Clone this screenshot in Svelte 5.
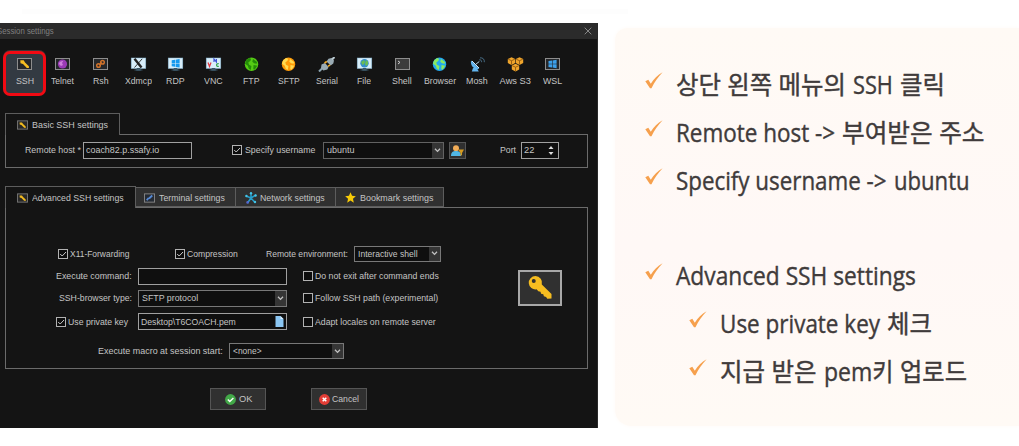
<script>
  const tools = [
    ['SSH', 18], ['Telnet', 23], ['Rsh', 16], ['Xdmcp', 27], ['RDP', 19], ['VNC', 19],
    ['FTP', 17], ['SFTP', 22], ['Serial', 22], ['File', 14], ['Shell', 20],
    ['Browser', 32], ['Mosh', 22], ['Aws S3', 31], ['WSL', 19]
  ];
  const notes = [
    { parts: [['상단 왼쪽 메뉴의', 170], ['SSH', 40], ['클릭', 45]] },
    { parts: [['Remote host ->', 159], ['부여받은 주소', 143]] },
    { parts: [['Specify username ->', 211], ['ubuntu', 76]] },
    { parts: [['Advanced SSH settings', 240]], section: true },
    { parts: [['Use private key', 160], ['체크', 45]], sub: true },
    { parts: [['지급 받은', 97], ['pem키', 69], ['업로드', 67]], sub: true }
  ];
  // Scales a label horizontally so that it fills its column.
  function fit(node, width) {
    const natural = node.offsetWidth;
    if (natural) node.style.transform = `scaleX(${width / natural})`;
  }
</script>

{#snippet label(text, w)}
  <span class="fit" style="width:{w}px"><span use:fit={w}>{text}</span></span>
{/snippet}

{#snippet check(on)}
  <svg class="check" viewBox="0 0 10 10"><rect x=".5" y=".5" width="9" height="9" fill="#0d0d0d" stroke="#b2b2b2" />{#if on}<path d="M2.2 5l2 2L8 3" fill="none" stroke="#c8c8c8" />{/if}</svg>
{/snippet}

{#snippet arrow()}
  <span class="arrow"><svg width="7" height="5" viewBox="0 0 7 5"><path d="M1 .8l2.5 2.6L6 .8" fill="none" stroke="#c4c4c4" stroke-width="1.3" /></svg></span>
{/snippet}

{#snippet keyTile()}
  <svg class="tile" viewBox="0 0 12 10"><rect x=".5" y=".5" width="11" height="9" fill="#282828" stroke="#777" /><path d="M2.8 2.2h2.6l1.2 1.6 2.9 2.9v1.6L7.8 8l-3-3L3 4.4Z" fill="#f1ba20" /></svg>
{/snippet}

{#snippet icon(name)}
  <svg width="17" height="15" viewBox="0 0 17 15">
    {#if name === 'SSH' || name === 'Telnet' || name === 'Rsh' || name === 'Shell' || name === 'WSL'}
      <rect x="1.5" y="1.5" width="14" height="11" fill={name === 'Shell' ? '#3b3b3b' : '#25272a'} stroke="#8d8d8d" />
    {/if}
    {#if name === 'SSH'}
      <path d="M4.3 3.2h3.4l1.3 2.2 3.9 3.8v1.9l-2.1-.1-3.8-3.9-2.5-.9Z" fill="#f6bd22" />
    {:else if name === 'Telnet'}
      <circle cx="8.5" cy="7" r="4.6" fill="#9b3bb6" /><path d="M5 7c.5-3 3-3 4.2-3L8 6l1 2-2 1Z" fill="#ce80db" />
    {:else if name === 'Rsh'}
      <g fill="none" stroke="#cf722b" stroke-width="1.5"><circle cx="6.5" cy="8.5" r="1.8" /><circle cx="10.5" cy="5.2" r="1.8" /><path d="M7 8l3-2.5" /></g>
    {:else if name === 'Xdmcp' || name === 'RDP' || name === 'VNC' || name === 'File'}
      <rect x="1.2" y="1" width="14.6" height="10.5" fill="#d8eefa" stroke="#87b6d1" stroke-width=".5" /><path d="M7 11.5h3l.5 1.8h-4ZM4.5 13h8" fill="#55707e" stroke="#385363" />
      {#if name === 'Xdmcp'}<path d="M4.5 1.8 11.5 10.5" stroke="#222" stroke-width="2.4" /><path d="M12.2 1.8 4.5 10.5" stroke="#222" stroke-width=".9" />
      {:else if name === 'RDP'}<path d="M4.7 3.3 8 2.8V6H4.7ZM8.6 2.7l4-.6V6h-4ZM4.7 6.6H8v3.2l-3.3-.5ZM8.6 6.6h4v3.9l-4-.6Z" fill="#1699ef" />
      {:else if name === 'VNC'}<g fill="none" stroke-width="1.2"><path d="M3 5.5l1.5 4L6 5.5" stroke="#e3353d" /><path d="M9 5V2l2.4 3V2" stroke="#3e53d6" /><path d="M13.8 6.8c-3-1-3 3.5 0 2.5" stroke="#34a64a" /></g>
      {:else}<circle cx="8.5" cy="6.2" r="4.2" fill="#338dcc" /><path d="M5 5l3-2 1 2-1 2-1.5 1ZM10 3l2 1.5v3L10 9 9 7Z" fill="#69bd55" />{/if}
    {:else if name === 'FTP' || name === 'SFTP' || name === 'Browser'}
      <circle cx="8.5" cy="7.3" r="6.7" fill={name === 'FTP' ? '#55cb14' : name === 'SFTP' ? '#ff9b08' : '#23aaf0'} />
      <path d="M3 3.5 6 1l2 .8-.5 2L5.3 5.5 6 7.8 8.4 9l-.6 4-2-1.3-1-3-2.8-2ZM10 2l4 3-.3 1.8-2.6-.5-1.8-1.6ZM10.5 8l3.7.8-2.4 3.8-1.5-.4Z" fill={name === 'FTP' ? '#238a08' : name === 'SFTP' ? '#ffdb52' : '#8bea60'} />
    {:else if name === 'Serial'}
      <path d="M1 14.5 5.5 10" stroke="#8ca4b1" stroke-width="2" /><path d="M3.5 7.5 7 6l3.5 4-1.2 2.5-4 1L3 11ZM8.5 4.5l2-2.7 3-.8 2.5 2.4-.7 3-2.6 2Z" fill="#9aabb4" /><path d="M6.5 6 8.8 4.5M10 9.4l2.1-1.5" stroke="#f3aa24" stroke-width="1.5" /><path d="M14 2.5 16.5 0" stroke="#bac9d0" stroke-width="2" />
    {:else if name === 'Shell'}
      <path d="M4 4l2 1.4L4 7" fill="none" stroke="#ccc" />
    {:else if name === 'Mosh'}
      <path d="M2 3.5C1.2 9 5 13 10.2 11.8ZM4 11l-1.2 3.5h7L8 11.3" fill="#62b5ef" /><path d="M3 4l7 7" stroke="#d3ecff" /><path d="m6.5 7.5 3.8-3" stroke="#b8d9ee" /><path d="M10.2 2.8c1.6-.3 2.6.8 2.4 2.4M11 .8c3-.2 4.6 1.5 4.3 4.4" fill="none" stroke="#476b83" />
    {:else if name === 'Aws S3'}
      {#each [[4.5, 4], [12.5, 4], [8.5, 10.5]] as p}
        <path d="M{p[0]} {p[1] - 3.7}l3.7 1.8v4L{p[0]} {p[1] + 4}l-3.7-1.9v-4Z" fill="#efa52c" /><path d="M{p[0] - 3.3} {p[1] - 1.8}l3.3 1.5 3.3-1.5M{p[0]} {p[1] - .3}v4" fill="none" stroke="#87500b" stroke-width=".8" />
      {/each}
    {:else}
      <path d="M4.5 4.1 8 3.5v3.2H4.5ZM8.6 3.4l4-.6v3.9h-4ZM4.5 7.3H8v3.3l-3.5-.5ZM8.6 7.3h4v3.9l-4-.6Z" fill="#3da0ea" />
    {/if}
  </svg>
{/snippet}

<div class="page">
  <div class="hairline"></div>
  <section class="dialog">
    <header><span class="title">{@render label('Session settings', 57)}</span><svg width="8" height="8" viewBox="0 0 8 8"><path d="M.7.7l6.6 6.6M7.3.7.7 7.3" stroke="#888" /></svg></header>
    <nav>
      {#each tools as [name, w], i}
        <div class="tool" class:active={i === 0}>{@render icon(name)}{@render label(name, w)}</div>
      {/each}
    </nav>

    <div class="tabs basic"><div class="tab current">{@render keyTile()}{@render label('Basic SSH settings', 76)}</div></div>
    <div class="panel host">
      {@render label('Remote host *', 56)}
      <div class="field">{@render label('coach82.p.ssafy.io', 73)}</div>
      {@render check(true)}
      {@render label('Specify username', 70)}
      <div class="field select">{@render label('ubuntu', 27)}{@render arrow()}</div>
      <div class="user"><svg width="13" height="11" viewBox="0 0 13 11"><circle cx="5" cy="3.2" r="3" fill="#f2ad58" /><path d="M0 11c0-4 2-5 5-5s5 1 5 5Z" fill="#51b7e5" /><path d="M7 4.5h6L11 8v2L9.5 11V8Z" fill="#d59b20" /></svg></div>
      {@render label('Port', 16)}
      <div class="field port">{@render label('22', 10)}<svg width="6" height="11" viewBox="0 0 6 11"><path d="M.5 4 3 1l2.5 3ZM.5 7 3 10l2.5-3Z" fill="#ddd" /></svg></div>
    </div>

    <div class="tabs advanced">
      <div class="tab current">{@render keyTile()}{@render label('Advanced SSH settings', 92)}</div>
      <div class="tab"><svg class="tile" viewBox="0 0 12 10"><rect x=".5" y=".5" width="11" height="9" fill="#252b34" stroke="#888" /><path d="M3 7.5 5 5M5.5 5.5 9 2.3" stroke="#5689d5" stroke-width="2" /></svg>{@render label('Terminal settings', 66)}</div>
      <div class="tab"><svg width="12" height="12" viewBox="0 0 12 12"><path d="M6 6V1M6 6 1 4M6 6l5-3M6 6l4 4.5M6 6 2.5 11" stroke="#279dca" stroke-width="1.5" /><g fill="#43c4e7"><circle cx="6" cy="1.3" r="1.2" /><circle cx="1.4" cy="4" r="1.2" /><circle cx="10.6" cy="3.5" r="1.2" /><circle cx="10" cy="10" r="1.2" /></g><circle cx="2.6" cy="10.4" r="1.3" fill="#5668d2" /></svg>{@render label('Network settings', 65)}</div>
      <div class="tab"><svg width="11" height="11" viewBox="0 0 12 12"><path d="m6 .3 1.7 3.9 4.1.4-3.1 2.8.9 4.2L6 9.4l-3.6 2.2.9-4.2L.2 4.6l4.1-.4Z" fill="#f7cb08" /></svg>{@render label('Bookmark settings', 73)}</div>
    </div>
    <div class="panel options">
      <div class="columns">
        <div class="form">
          <div class="row first">
            {@render check(true)}{@render label('X11-Forwarding', 59)}
            {@render check(true)}{@render label('Compression', 51)}
            {@render label('Remote environment:', 82)}
            <div class="field select">{@render label('Interactive shell', 60)}{@render arrow()}</div>
          </div>
          <div class="row">
            <div class="name">{@render label('Execute command:', 76)}</div>
            <div class="field"></div>
            {@render check(false)}{@render label('Do not exit after command ends', 124)}
          </div>
          <div class="row">
            <div class="name">{@render label('SSH-browser type:', 73)}</div>
            <div class="field select">{@render label('SFTP protocol', 56)}{@render arrow()}</div>
            {@render check(false)}{@render label('Follow SSH path (experimental)', 123)}
          </div>
          <div class="row private">
            <div class="name keyname">{@render check(true)}{@render label('Use private key', 60)}</div>
            <div class="field file">{@render label('Desktop\\T6COACH.pem', 95)}<svg width="9" height="11" viewBox="0 0 9 11"><path d="M.5 0h5L8.5 3v8h-8Z" fill="#8bc6f3" /><path d="M5.5 0v3h3Z" fill="#d6edff" /></svg></div>
            {@render check(false)}{@render label('Adapt locales on remote server', 121)}
          </div>
        </div>
        <div class="keybutton"><svg width="26" height="26" viewBox="0 0 26 26"><path fill-rule="evenodd" d="M8.5 1a6.6 6.6 0 0 1 6.3 8.4L24.5 19v4.4l-4.2.3-1.2-1.8-2.2-.6-.6-2-2.2-.6-.6-2-2.2-.5-1.7-1.9A6.7 6.7 0 1 1 8.5 1ZM6.7 4a2 2 0 1 0 .1 4 2 2 0 0 0-.1-4Z" fill="#f6bd20" /></svg></div>
      </div>
      <div class="macro">
        {@render label('Execute macro at session start:', 125)}
        <div class="field select">{@render label('<none>', 29)}{@render arrow()}</div>
      </div>
    </div>
    <footer>
      <div class="button ok"><svg width="11" height="11" viewBox="0 0 11 11"><circle cx="5.5" cy="5.5" r="5.4" fill="#42a848" /><path d="m2.8 5.5 2 2 3.6-3.6" fill="none" stroke="#fff" stroke-width="1.4" /></svg>{@render label('OK', 13)}</div>
      <div class="button"><svg width="11" height="11" viewBox="0 0 11 11"><circle cx="5.5" cy="5.5" r="5.4" fill="#e33d36" /><path d="m3.7 3.7 3.6 3.6M7.3 3.7 3.7 7.3" stroke="#fff" stroke-width="1.5" /></svg>{@render label('Cancel', 27)}</div>
    </footer>
  </section>

  <aside>
    {#each notes as n}
      <div class="note" class:section={n.section} class:sub={n.sub}>
        <svg width="18" height="17" viewBox="0 0 18 17"><path d="M.3 9.2 3.3 7.7 5.8 11.7C8.8 7 12.6 3 17.6.3 13 5 9.5 10.2 6.5 16.3H5Z" fill="#f6a04d" /></svg>
        <div class="words">{#each n.parts as [text, w]}{@render label(text, w)}{/each}</div>
      </div>
    {/each}
  </aside>
</div>

<style>
  :global(body) { margin: 0; background: #fff; overflow: hidden; }
  * { box-sizing: border-box; }
  svg { display: block; flex: none; }
  .page { width: 1019px; height: 446px; display: grid; grid-template-columns: 598px 1fr; grid-template-rows: 23px 1fr; background: #fff; }
  .hairline { grid-column: 1 / 3; width: 606px; height: 5px; margin: 9px 0 0 22px; background: #fdfdfd; }
  .fit { display: block; flex: none; white-space: nowrap; }
  .fit > span { display: inline-block; transform-origin: 0 50%; }
  .dialog { width: 598px; height: 405px; background: #141414; color: #c4c4c4; font: 9.3px/12px "Liberation Sans", Arial, sans-serif; overflow: hidden; border-right: 1px solid #292929; }
  header { height: 16px; background: #2b2b2b; color: #808080; display: flex; align-items: center; justify-content: space-between; padding-right: 5px; }
  .title { margin-left: -3px; }
  nav { display: grid; grid-template-columns: 40px repeat(14, 37.7px); margin: 12px 0 0 5px; height: 44px; }
  .tool { display: flex; flex-direction: column; align-items: center; padding-top: 6px; gap: 3px; }
  .tool:not(.active) { margin-left: -1px; margin-right: 1px; }
  .tool.active { width: 43px; height: 45px; margin-left: -2px; padding-top: 3px; border: 3px solid #f20a13; border-radius: 7px; background: #333a42; box-shadow: 0 -1px 0 #3b3535; }
  .tabs { display: flex; align-items: flex-end; margin-left: 5px; }
  .basic { height: 21px; margin-top: 18px; }
  .advanced { height: 21px; margin-top: 18px; }
  .tab { height: 20px; display: flex; align-items: center; gap: 4px; padding: 1px 0 0 8px; width: 100px; background: #303030; border: 1px solid #5d5d5d; border-left: 0; }
  .tab:nth-child(n + 3) { width: 100px; padding-left: 9px; gap: 3px; }
  .tab:nth-child(4) { width: 108px; gap: 4px; }
  .tab.current { width: 115px; height: 22px; margin-bottom: -1px; padding: 0 0 0 11px; background: #141414; border-left: 1px solid #5d5d5d; border-bottom: 0; z-index: 1; }
  .advanced .tab.current { width: 131px; }
  .tile { width: 11px; height: 10px; }
  .panel { width: 583px; margin-left: 5px; border: 1px solid #6b6b6b; }
  .host { height: 34px; display: grid; align-items: center; grid-template-columns: 58px 149px 13px 79px 125px 51px 21px 38px; padding: 0 0 2px 19px; }
  .host > .field { width: 109px; }
  .host > .select { width: 121px; border-color: #626262; margin-left: -1px; }
  .host > .port { width: 38px; padding-right: 4px; }
  .check { width: 10px; height: 10px; }
  .field { height: 17px; border: 1px solid #a0a0a0; background: #0f0f0f; display: flex; align-items: center; justify-content: space-between; padding-left: 2px; }
  .select { border-color: #787878; padding-left: 3px; }
  .arrow { width: 11px; height: 100%; display: grid; place-items: center; background: #353535; }
  .user { width: 17px; height: 17px; display: grid; place-items: center; border: 1px solid #555; background: #303030; }
  .options { height: 162px; padding-top: 34px; }
  .columns { display: flex; }
  .form { width: 512px; }
  .row { height: 22px; display: grid; align-items: center; grid-template-columns: 132px 165px 12px 1fr; }
  .row > .field { width: 149px; }
  .row.private { height: 25px; }
  .row.first { grid-template-columns: 12px 105px 12px 79px 88px 87px; padding-left: 52px; height: 23px; }
  .row.first > .field { width: 87px; height: 16px; }
  .name { display: flex; justify-content: flex-end; padding-right: 6px; }
  .keyname { align-items: center; gap: 2px; padding-right: 10px; }
  .file { padding-right: 2px; }
  .keybutton { width: 44px; height: 36px; margin-top: 28px; display: grid; place-items: center; border: 2px solid #a8a8a8; background: #303030; }
  .macro { display: flex; align-items: center; gap: 6px; margin: 9px 0 0 92px; }
  .macro .field { width: 115px; height: 16px; }
  footer { display: flex; gap: 45px; padding: 19px 0 0 210px; }
  .button { width: 56px; height: 22px; border: 1px solid #555; background: #303030; display: flex; align-items: center; gap: 2px; padding-left: 7px; }
  .ok { padding-left: 14px; gap: 3px; }
  aside { margin: 5px 0 0 17px; height: 398px; padding: 32px 0 0 30px; border-radius: 12px 0 0 16px; background: linear-gradient(#fffaf5, #fff8f6 55%, #fffaf5); box-shadow: 0 0 4px #fffaf7; color: #403b3b; font: 25px/48px "Open Sans", "Noto Sans CJK KR", sans-serif; -webkit-text-stroke: .4px #403b3b; }
  .note { height: 48px; display: flex; align-items: center; gap: 13px; }
  .note > svg { margin-top: -8px; }
  .words { display: flex; align-items: baseline; gap: 7px; }
  .note.section { margin-top: 47px; }
  .note.sub { margin-left: 44px; }
</style>
